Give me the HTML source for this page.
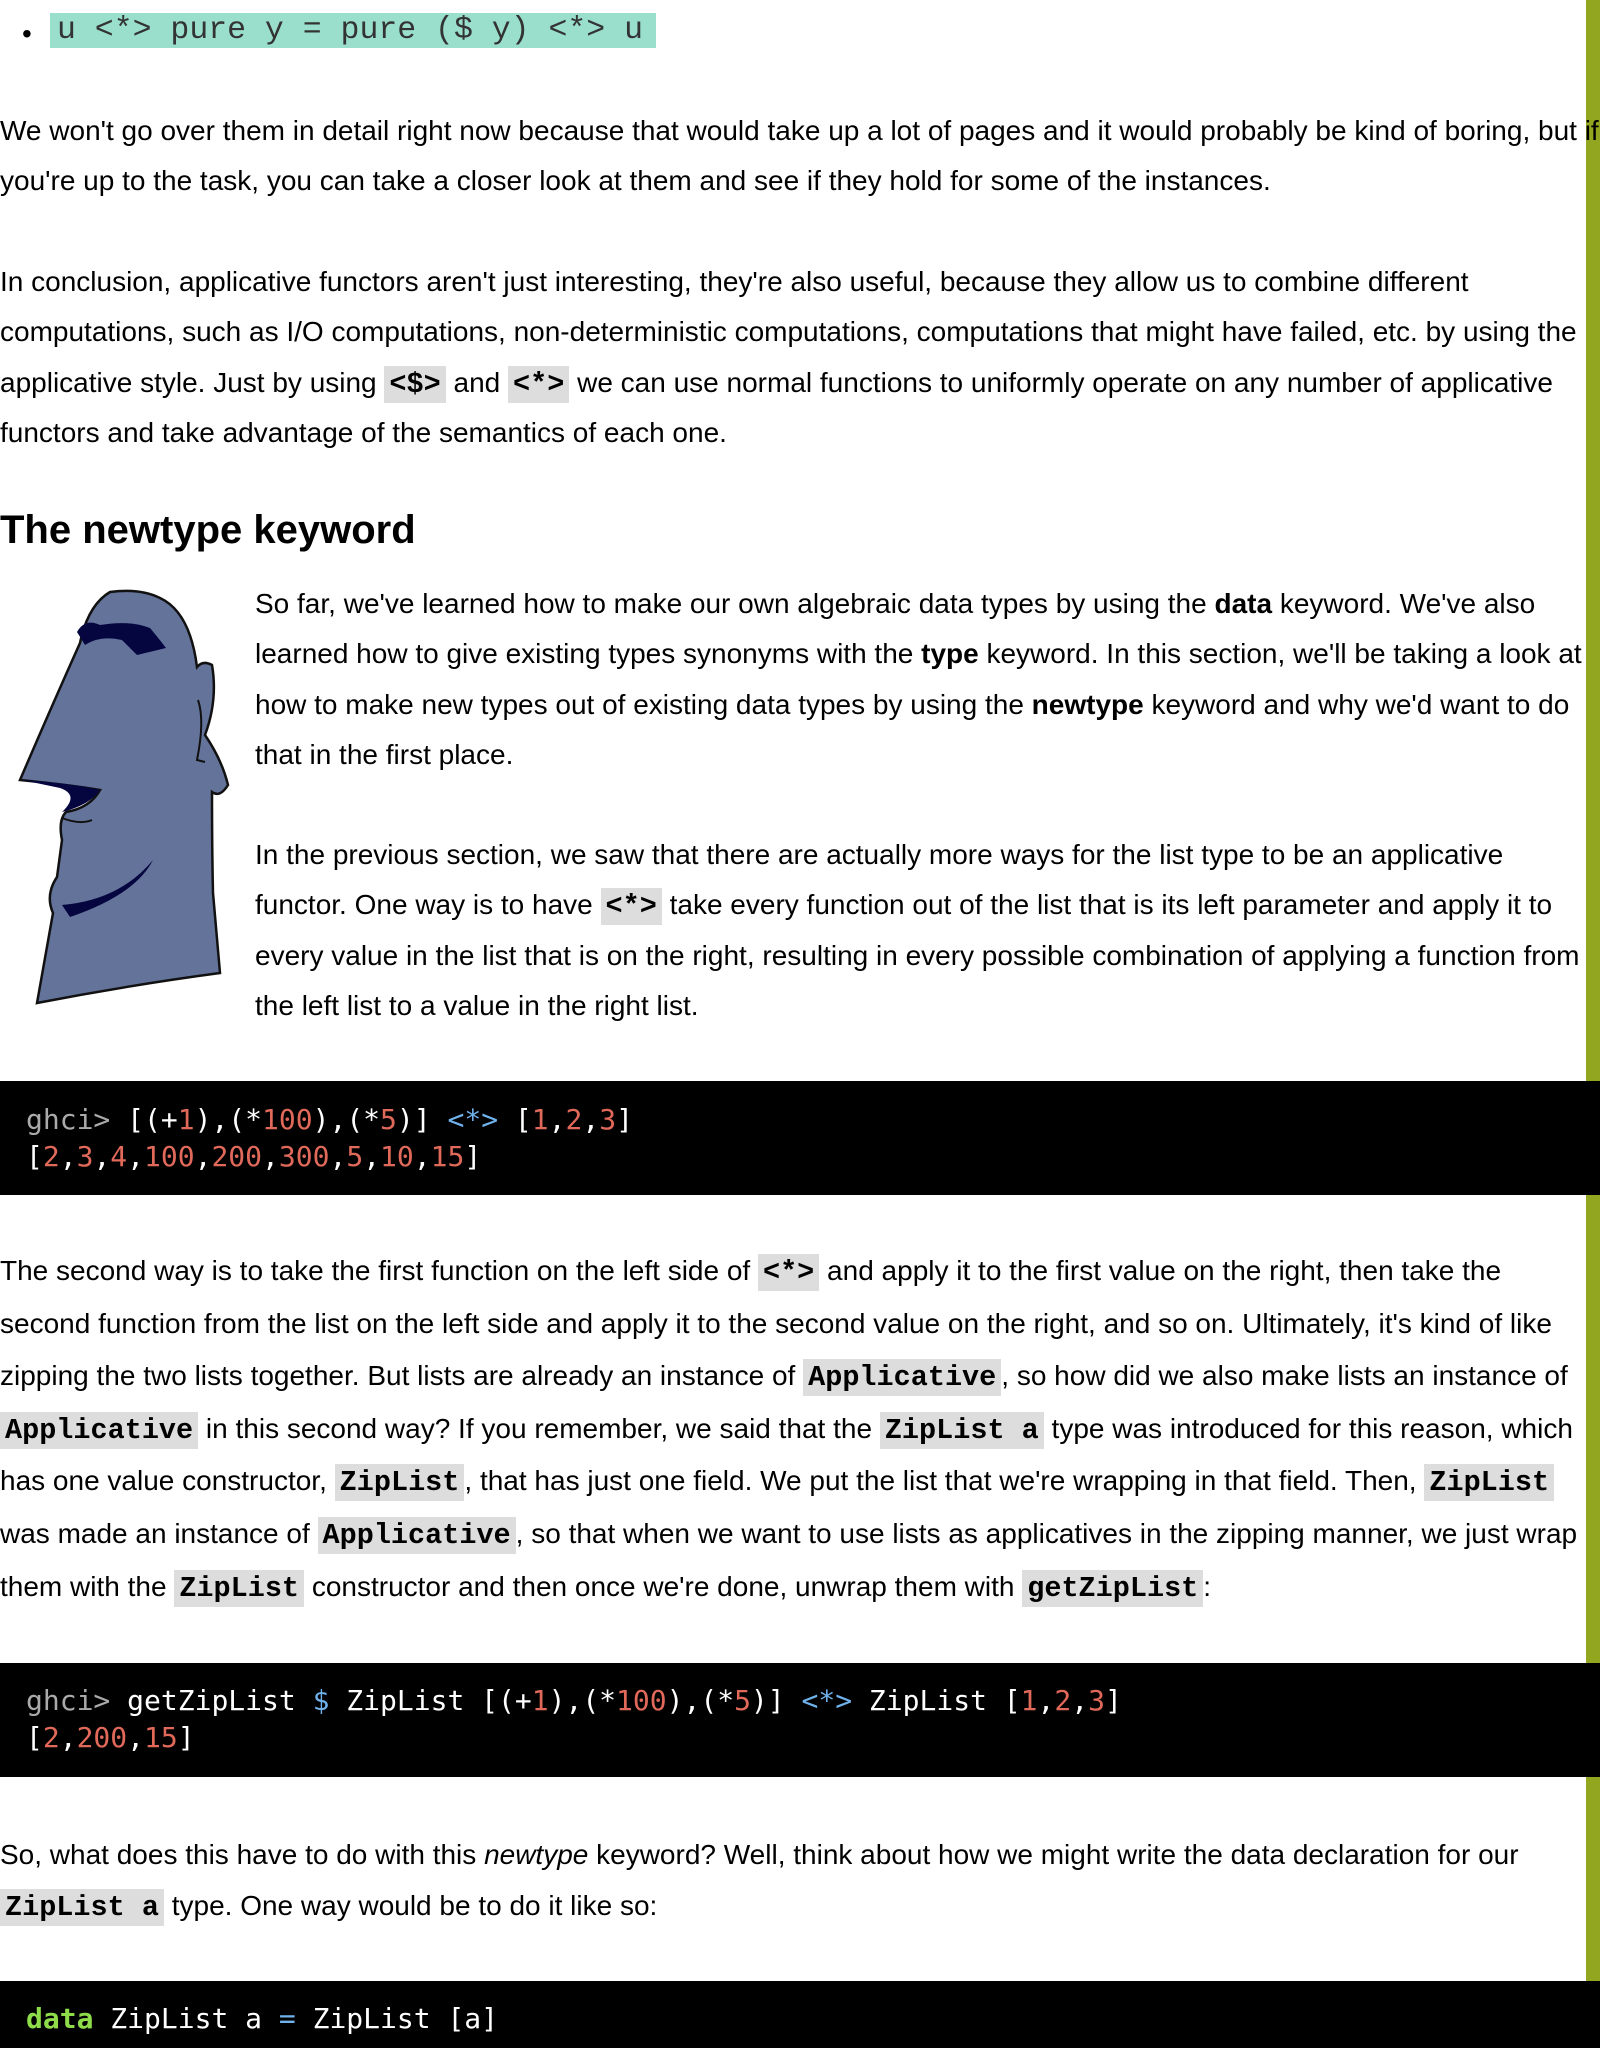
<!DOCTYPE html>
<html><head><meta charset="utf-8"><style>
html,body{margin:0;padding:0}
body{width:1600px;height:2048px;position:relative;overflow:hidden;background:#fff;font-family:"Liberation Sans",Arial,sans-serif;font-size:28px;color:#000}
.bar{position:absolute;left:1586px;top:0;width:14px;height:2048px;background:#93a61f}
.p{position:absolute;left:0;white-space:nowrap;line-height:50.3px}
code{font-family:"Liberation Mono","Courier New",monospace;font-weight:bold;background:#ddd;padding:2px 5px;font-size:28.5px;line-height:1}
.blk{position:absolute;left:0;width:1600px;background:#000;font-family:"DejaVu Sans Mono",monospace;font-size:28px;line-height:37px;color:#fff;box-sizing:border-box;padding-left:26px;white-space:pre}
.g{color:#aaa}.n{color:#e0695a}.b{color:#6fb2ec}.k{color:#8fdc4a;font-weight:bold}
h2{position:absolute;left:0;top:510px;margin:0;font-size:40px;line-height:40px;font-weight:bold}
</style></head><body>
<div class="bar"></div>
<div style="position:absolute;left:22px;top:20px;font-size:28px;line-height:28px">•</div>
<div style="position:absolute;left:50px;top:13px;width:606px;height:35px;background:#99dfcc;font-family:'Liberation Mono',monospace;font-size:31.5px;line-height:35px;color:#333;padding-left:7px;box-sizing:border-box;white-space:pre">u &lt;*&gt; pure y = pure ($ y) &lt;*&gt; u</div>

<div class="p" style="top:106px">We won't go over them in detail right now because that would take up a lot of pages and it would probably be kind of boring, but if<br>you're up to the task, you can take a closer look at them and see if they hold for some of the instances.</div>

<div class="p" style="top:257px">In conclusion, applicative functors aren't just interesting, they're also useful, because they allow us to combine different<br>computations, such as I/O computations, non-deterministic computations, computations that might have failed, etc. by using the<br>applicative style. Just by using <code>&lt;$&gt;</code> and <code>&lt;*&gt;</code> we can use normal functions to uniformly operate on any number of applicative<br>functors and take advantage of the semantics of each one.</div>

<h2>The newtype keyword</h2>

<svg style="position:absolute;left:0;top:580px" width="250" height="430" viewBox="0 580 250 430">
<path d="M110 592 Q140 588 160 598 Q190 612 197 667 Q203 660 212 665 Q218 700 205 735 Q222 760 228 785 Q220 798 212 792 Q212 850 213 893 L220 973 Q130 985 37 1003 L53 913 Q45 895 57 877 L62 840 Q58 820 66 812 Q90 808 100 790 Q70 785 20 780 Q50 710 80 643 Q88 605 110 592 Z" fill="#64739a" stroke="#111" stroke-width="2.5"/>
<path d="M77 632 Q85 618 100 625 Q130 620 150 628 Q160 640 166 648 L137 655 L122 640 Q100 635 85 645 Z" fill="#050540"/>
<path d="M22 780 Q70 783 100 790 Q90 805 62 812 Q80 795 60 788 Z" fill="#050540"/>
<path d="M62 905 Q120 900 153 860 Q135 895 70 917 Z" fill="#050540"/>
<path d="M62 818 Q80 825 92 820" fill="none" stroke="#111" stroke-width="2"/>
<path d="M198 700 Q205 720 197 760 L205 762" fill="none" stroke="#111" stroke-width="2"/>
</svg>

<div class="p" style="left:255px;top:579px">So far, we've learned how to make our own algebraic data types by using the <b>data</b> keyword. We've also<br>learned how to give existing types synonyms with the <b>type</b> keyword. In this section, we'll be taking a look at<br>how to make new types out of existing data types by using the <b>newtype</b> keyword and why we'd want to do<br>that in the first place.</div>

<div class="p" style="left:255px;top:830px">In the previous section, we saw that there are actually more ways for the list type to be an applicative<br>functor. One way is to have <code>&lt;*&gt;</code> take every function out of the list that is its left parameter and apply it to<br>every value in the list that is on the right, resulting in every possible combination of applying a function from<br>the left list to a value in the right list.</div>

<div class="blk" style="top:1081px;height:114px;padding-top:20px"><span class="g">ghci&gt;</span> [(+<span class="n">1</span>),(*<span class="n">100</span>),(*<span class="n">5</span>)] <span class="b">&lt;*&gt;</span> [<span class="n">1</span>,<span class="n">2</span>,<span class="n">3</span>]
[<span class="n">2</span>,<span class="n">3</span>,<span class="n">4</span>,<span class="n">100</span>,<span class="n">200</span>,<span class="n">300</span>,<span class="n">5</span>,<span class="n">10</span>,<span class="n">15</span>]</div>

<div class="p" style="top:1245px;line-height:52.6px">The second way is to take the first function on the left side of <code>&lt;*&gt;</code> and apply it to the first value on the right, then take the<br>second function from the list on the left side and apply it to the second value on the right, and so on. Ultimately, it's kind of like<br>zipping the two lists together. But lists are already an instance of <code>Applicative</code>, so how did we also make lists an instance of<br><code>Applicative</code> in this second way? If you remember, we said that the <code>ZipList a</code> type was introduced for this reason, which<br>has one value constructor, <code>ZipList</code>, that has just one field. We put the list that we're wrapping in that field. Then, <code>ZipList</code><br>was made an instance of <code>Applicative</code>, so that when we want to use lists as applicatives in the zipping manner, we just wrap<br>them with the <code>ZipList</code> constructor and then once we're done, unwrap them with <code>getZipList</code>:</div>

<div class="blk" style="top:1663px;height:114px;padding-top:19px"><span class="g">ghci&gt;</span> getZipList <span class="b">$</span> ZipList [(+<span class="n">1</span>),(*<span class="n">100</span>),(*<span class="n">5</span>)] <span class="b">&lt;*&gt;</span> ZipList [<span class="n">1</span>,<span class="n">2</span>,<span class="n">3</span>]
[<span class="n">2</span>,<span class="n">200</span>,<span class="n">15</span>]</div>

<div class="p" style="top:1829px;line-height:51px">So, what does this have to do with this <i>newtype</i> keyword? Well, think about how we might write the data declaration for our<br><code>ZipList a</code> type. One way would be to do it like so:</div>

<div class="blk" style="top:1981px;height:67px;padding-top:19px"><span class="k">data</span> ZipList a <span class="b">=</span> ZipList [a]</div>
</body></html>
